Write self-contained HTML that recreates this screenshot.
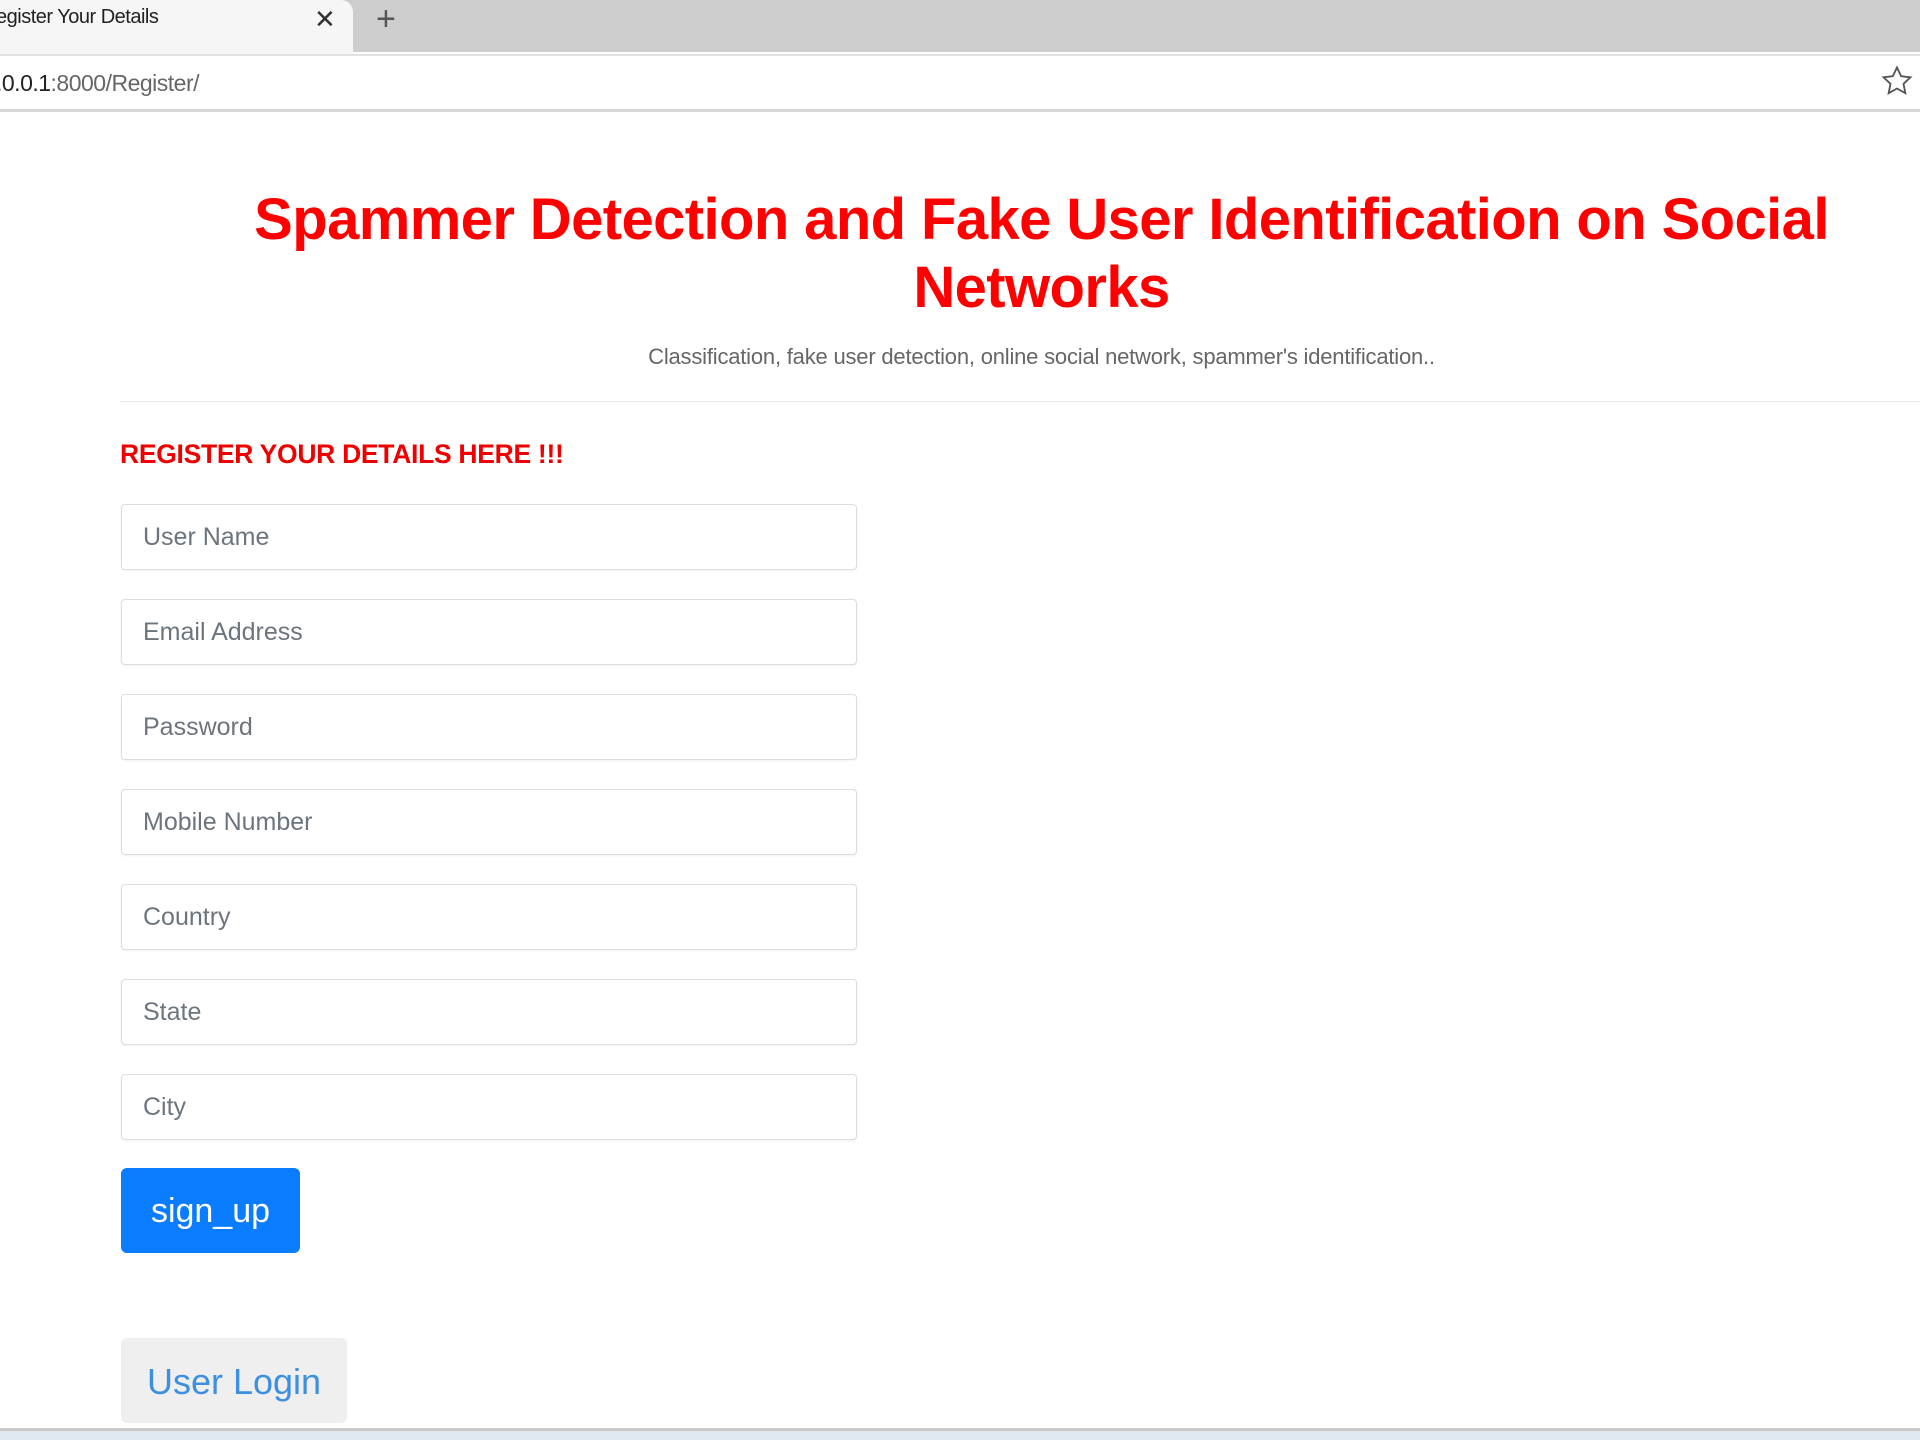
<!DOCTYPE html>
<html><head><meta charset="utf-8"><style>
*{margin:0;padding:0;box-sizing:border-box}
body{width:1920px;height:1440px;overflow:hidden;background:#fff;font-family:"Liberation Sans",sans-serif;position:relative}
.tabbar{position:absolute;left:0;top:0;width:1920px;height:52px;background:#cdcdcd}
.tab{position:absolute;left:0;top:0;width:353px;height:54px;background:#f6f6f6;border-top-right-radius:12px}
.tab span{position:absolute;left:-4px;top:6px;font-size:20px;color:#222;letter-spacing:-0.5px}
.tab .x{position:absolute;left:314px;top:4px;font-size:26px;color:#333}
.plus{position:absolute;left:376px;top:0px;font-size:34px;color:#555;font-weight:300}
.addr{position:absolute;left:0;top:54px;width:1920px;height:58px;background:#fff;border-top:2px solid #e2e2e2;border-bottom:3px solid #d8d8d8}
.addr .url{position:absolute;left:-4px;top:14px;font-size:23px;color:#222;letter-spacing:-0.5px}
.addr .url i{font-style:normal;color:#666}
.star{position:absolute;right:6px;top:8px}
h1{position:absolute;left:120px;width:1843px;top:186px;text-align:center;color:#f00;font-size:58px;line-height:68px;font-weight:bold;letter-spacing:-0.6px}
.sub{position:absolute;left:120px;width:1843px;top:344px;text-align:center;color:#666;font-size:22px;letter-spacing:-0.2px}
.hr{position:absolute;left:120px;right:0;top:401px;border-top:1px solid #e8e8e8}
.reg{position:absolute;left:120px;top:439px;color:#e00;font-size:26.5px;font-weight:bold;letter-spacing:-0.3px}
.in{position:absolute;left:121px;width:736px;height:66px;border:1.5px solid #ddd;border-radius:4px;background:#fff;box-shadow:0 1px 2px rgba(0,0,0,.06)}
.in span{position:absolute;left:21px;top:18px;font-size:25px;color:#6c757d}
.btn{position:absolute;left:121px;top:1168px;width:179px;height:85px;background:#0a7cff;border-radius:6px;color:#fff;font-size:34px;text-align:center;line-height:86px}
.login{position:absolute;left:121px;top:1338px;width:226px;height:85px;background:#efefef;border-radius:6px;color:#3d8fe0;font-size:36px;text-align:center;line-height:88px}
.bottom{position:absolute;left:0;top:1428px;width:1920px;height:12px;background:#dfe8ee;border-top:3px solid #c9c9c9}
</style></head><body>
<div class="tabbar"></div>
<div class="tab"><span>egister Your Details</span><span class="x">✕</span></div>
<div class="plus">+</div>
<div class="addr"><div class="url">.0.0.1<i>:8000/Register/</i></div>
<svg class="star" width="34" height="34" viewBox="0 0 24 24"><path d="M12 2.5l2.9 6.1 6.6.8-4.9 4.6 1.3 6.6L12 17.3l-5.9 3.3 1.3-6.6-4.9-4.6 6.6-.8z" fill="none" stroke="#555" stroke-width="1.3"/></svg></div>
<h1>Spammer Detection and Fake User Identification on Social<br>Networks</h1>
<div class="sub">Classification, fake user detection, online social network, spammer's identification..</div>
<div class="hr"></div>
<div class="reg">REGISTER YOUR DETAILS HERE !!!</div>
<div class="in" style="top:504px"><span>User Name</span></div>
<div class="in" style="top:599px"><span>Email Address</span></div>
<div class="in" style="top:694px"><span>Password</span></div>
<div class="in" style="top:789px"><span>Mobile Number</span></div>
<div class="in" style="top:884px"><span>Country</span></div>
<div class="in" style="top:979px"><span>State</span></div>
<div class="in" style="top:1074px"><span>City</span></div>
<div class="btn">sign_up</div>
<div class="login">User Login</div>
<div class="bottom"></div>
</body></html>
